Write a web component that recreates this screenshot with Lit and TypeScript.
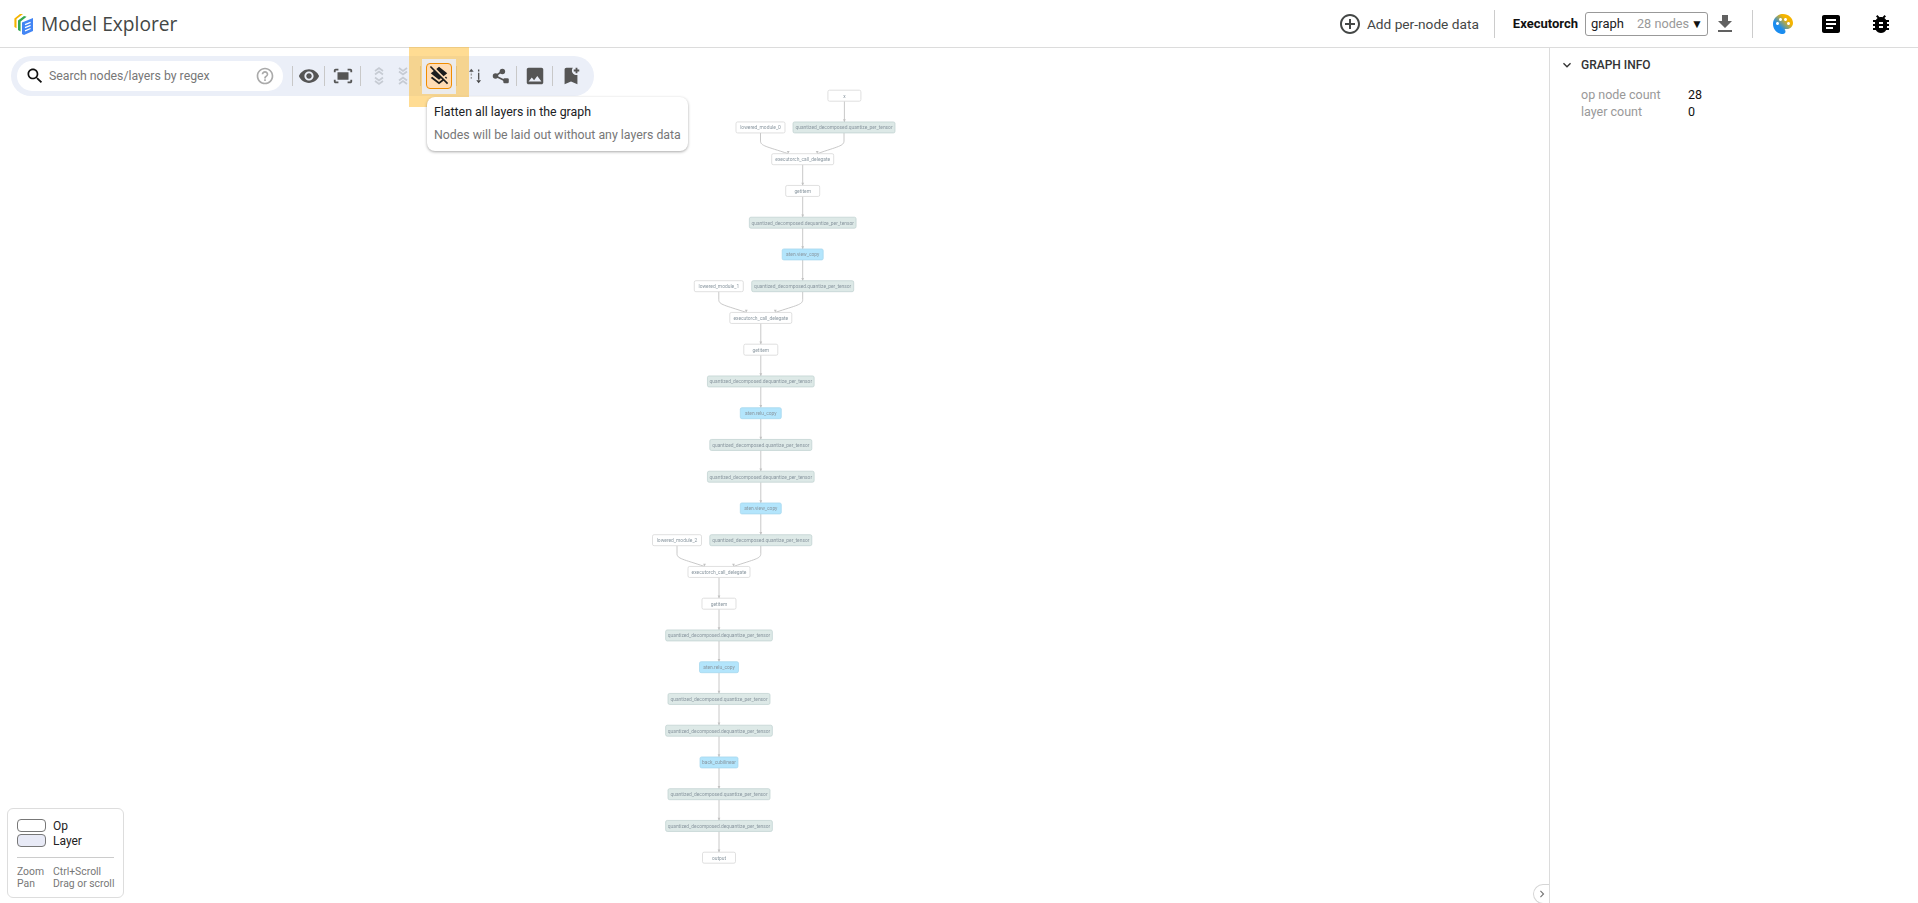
import { LitElement, html, css, svg } from "lit";
import { customElement } from "lit/decorators.js";

const P = {
  search: "M15.5 14h-.79l-.28-.27C15.41 12.59 16 11.11 16 9.5 16 5.91 13.09 3 9.5 3S3 5.91 3 9.5 5.91 16 9.5 16c1.61 0 3.09-.59 4.23-1.57l.27.28v.79l5 4.99L20.49 19l-4.99-5zm-6 0C7.01 14 5 11.99 5 9.5S7.01 5 9.5 5 14 7.01 14 9.5 11.99 14 9.5 14z",
  help: "M11 18h2v-2h-2v2zm1-16C6.48 2 2 6.48 2 12s4.48 10 10 10 10-4.48 10-10S17.52 2 12 2zm0 18c-4.41 0-8-3.59-8-8s3.59-8 8-8 8 3.59 8 8-3.59 8-8 8zm0-14c-2.21 0-4 1.79-4 4h2c0-1.1.9-2 2-2s2 .9 2 2c0 2-3 1.75-3 5h2c0-2.25 3-2.5 3-5 0-2.21-1.79-4-4-4z",
  eye: "M12 4.5C7 4.5 2.73 7.61 1 12c1.73 4.39 6 7.5 11 7.5s9.27-3.11 11-7.5c-1.73-4.39-6-7.5-11-7.5zM12 17c-2.76 0-5-2.24-5-5s2.24-5 5-5 5 2.24 5 5-2.24 5-5 5zm0-8c-1.66 0-3 1.34-3 3s1.34 3 3 3 3-1.34 3-3-1.34-3-3-3z",
  fit: "M17 4h3c1.1 0 2 .9 2 2v2h-2V6h-3V4zM4 8V6h3V4H4c-1.1 0-2 .9-2 2v2h2zm16 8v2h-3v2h3c1.1 0 2-.9 2-2v-2h-2zM7 18H4v-2H2v2c0 1.1.9 2 2 2h3v-2zM18 8H6v8h12V8z",
  flat: "M19.81 14.99l1.19-.92-1.43-1.43-1.19.92 1.43 1.43zm-.45-4.72L21 9l-9-7-2.91 2.27 7.87 7.88 2.4-1.88zM3.27 1L2 2.27l4.22 4.22L3 9l1.63 1.27L12 16l2.1-1.63 1.43 1.43L12 18.54l-7.37-5.73L3 14.07l9 7 4.95-3.85L20.73 21 22 19.73 3.27 1z",
  image: "M21 19V5c0-1.1-.9-2-2-2H5c-1.1 0-2 .9-2 2v14c0 1.1.9 2 2 2h14c1.1 0 2-.9 2-2zM8.5 13.5l2.5 3.01L14.5 12l4.5 6H5l3.5-4.5z",
  bookmark: "M21 7h-2v2h-2V7h-2V5h2V3h2v2h2v2zm-2 14-7-3-7 3V5c0-1.1.9-2 2-2h7c-.63.84-1 1.87-1 3 0 2.76 2.24 5 5 5 .34 0 .68-.03 1-.1V21z",
  add: "M13 7h-2v4H7v2h4v4h2v-4h4v-2h-4V7zm-1-5C6.48 2 2 6.48 2 12s4.48 10 10 10 10-4.48 10-10S17.52 2 12 2zm0 18c-4.41 0-8-3.59-8-8s3.59-8 8-8 8 3.59 8 8-3.59 8-8 8z",
  download: "M19 9h-4V3H9v6H5l7 7 7-7zM5 18v2h14v-2H5z",
  palette: "M12 2C6.49 2 2 6.49 2 12s4.49 10 10 10c1.38 0 2.5-1.12 2.5-2.5 0-.61-.23-1.2-.64-1.67-.08-.1-.13-.21-.13-.33 0-.28.22-.5.5-.5H16c3.31 0 6-2.69 6-6 0-4.96-4.49-9-10-9zm5.5 11c-.83 0-1.5-.67-1.5-1.5s.67-1.5 1.5-1.5 1.5.67 1.5 1.5-.67 1.5-1.5 1.5zm-3-4c-.83 0-1.5-.67-1.5-1.5S13.67 6 14.5 6s1.5.67 1.5 1.5S15.33 9 14.5 9zM5 11.5c0-.83.67-1.5 1.5-1.5s1.5.67 1.5 1.5S7.33 13 6.5 13 5 12.33 5 11.5zm6-4c0 .83-.67 1.5-1.5 1.5S8 8.33 8 7.5 8.67 6 9.5 6s1.5.67 1.5 1.5z",
  article: "M19 3H5c-1.1 0-2 .9-2 2v14c0 1.1.9 2 2 2h14c1.1 0 2-.9 2-2V5c0-1.1-.9-2-2-2zm-5 14H7v-2h7v2zm3-4H7v-2h10v2zm0-4H7V7h10v2z",
  bug: "M20 8h-2.81c-.45-.78-1.07-1.45-1.82-1.96L17 4.41 15.59 3l-2.17 2.17C12.96 5.06 12.49 5 12 5s-.96.06-1.41.17L8.41 3 7 4.41l1.62 1.63C7.88 6.55 7.26 7.22 6.81 8H4v2h2.09c-.05.33-.09.66-.09 1v1H4v2h2v1c0 .34.04.67.09 1H4v2h2.81c1.04 1.79 2.97 3 5.19 3s4.15-1.21 5.19-3H20v-2h-2.09c.05-.33.09-.66.09-1v-1h2v-2h-2v-1c0-.34-.04-.67-.09-1H20V8zm-6 8h-4v-2h4v2zm0-4h-4v-2h4v2z",
  more: "M16.59 8.59L12 13.17 7.41 8.59 6 10l6 6 6-6z",
  right: "M10 6L8.59 7.41 13.17 12l-4.58 4.59L10 18l6-6z",
};

const icon = (d: string, cls = "") => html`<svg class="ic ${cls}" viewBox="0 0 24 24"><path d=${d}></path></svg>`;

type Kind = "op" | "tq" | "blue";
interface N { r: number; c: number; w: number; t: string; k: Kind; }

const Q = "quantized_decomposed.quantize_per_tensor";
const D = "quantized_decomposed.dequantize_per_tensor";
const CD = "executorch_call_delegate";
const A = 802.7, B = 760.8, C = 719;

const NODES: N[] = [
  { r: 0, c: 844.4, w: 33, t: "x", k: "op" },
  { r: 1, c: 760.5, w: 49, t: "lowered_module_0", k: "op" },
  { r: 1, c: 844, w: 102, t: Q, k: "tq" },
  { r: 2, c: A, w: 62, t: CD, k: "op" },
  { r: 3, c: A, w: 34, t: "getitem", k: "op" },
  { r: 4, c: A, w: 106.7, t: D, k: "tq" },
  { r: 5, c: A, w: 41, t: "aten.view_copy", k: "blue" },
  { r: 6, c: 718.8, w: 49, t: "lowered_module_1", k: "op" },
  { r: 6, c: A, w: 102, t: Q, k: "tq" },
  { r: 7, c: B, w: 62, t: CD, k: "op" },
  { r: 8, c: B, w: 34, t: "getitem", k: "op" },
  { r: 9, c: B, w: 106.7, t: D, k: "tq" },
  { r: 10, c: B, w: 41, t: "aten.relu_copy", k: "blue" },
  { r: 11, c: B, w: 102, t: Q, k: "tq" },
  { r: 12, c: B, w: 106.7, t: D, k: "tq" },
  { r: 13, c: B, w: 41, t: "aten.view_copy", k: "blue" },
  { r: 14, c: 677, w: 49, t: "lowered_module_2", k: "op" },
  { r: 14, c: B, w: 102, t: Q, k: "tq" },
  { r: 15, c: C, w: 62, t: CD, k: "op" },
  { r: 16, c: C, w: 34, t: "getitem", k: "op" },
  { r: 17, c: C, w: 106.7, t: D, k: "tq" },
  { r: 18, c: C, w: 39, t: "aten.relu_copy", k: "blue" },
  { r: 19, c: C, w: 102, t: Q, k: "tq" },
  { r: 20, c: C, w: 106.7, t: D, k: "tq" },
  { r: 21, c: C, w: 38, t: "back_cubilinear", k: "blue" },
  { r: 22, c: C, w: 102, t: Q, k: "tq" },
  { r: 23, c: C, w: 106.7, t: D, k: "tq" },
  { r: 24, c: C, w: 33, t: "output", k: "op" },
];

const rowY = (r: number) => 95.7 + r * 31.75;

const V: [number, number][] = [
  [844.4, 0], [A, 2], [A, 3], [A, 4], [A, 5],
  [B, 7], [B, 8], [B, 9], [B, 10], [B, 11], [B, 12], [B, 13],
  [C, 15], [C, 16], [C, 17], [C, 18], [C, 19], [C, 20], [C, 21], [C, 22], [C, 23],
];
const M: [number, number, number, number][] = [
  [760.5, 844, A, 1],
  [718.8, A, B, 6],
  [677, B, C, 14],
];

const arrow = (x: number, y: number) => svg`<path class="arrow" d="M${x - 1.4} ${y - 2.6}L${x} ${y}L${x + 1.4} ${y - 2.6}z"></path>`;

function edges() {
  const out: unknown[] = [];
  for (const [x, r] of V) {
    const y1 = rowY(r) + 5.5, y2 = rowY(r + 1) - 5.5;
    out.push(svg`<path class="edge" d="M${x} ${y1}V${y2}"></path>`, arrow(x, y2));
  }
  for (const [l, q, t, r] of M) {
    const y1 = rowY(r) + 5.5, y2 = rowY(r + 1) - 5.5;
    const tl = t - 14.5, tr = t + 14.5;
    out.push(
      svg`<path class="edge" d="M${l} ${y1}V${y1 + 8}C${l} ${y1 + 13} ${l + 6} ${y1 + 13.5} ${tl} ${y2}"></path>`,
      svg`<path class="edge" d="M${q} ${y1}V${y1 + 8}C${q} ${y1 + 13} ${q - 6} ${y1 + 13.5} ${tr} ${y2}"></path>`,
      arrow(tl, y2), arrow(tr, y2)
    );
  }
  return out;
}

@customElement("app-root")
export class AppRoot extends LitElement {
  static styles = css`
    :host { display: flex; flex-direction: column; height: 100vh; overflow: hidden; background: #fff; font-family: Roboto, "Liberation Sans", sans-serif; color: #202124; }
    .ic { display: block; width: 24px; height: 24px; fill: currentColor; flex: none; }
    header { flex: none; height: 47px; border-bottom: 1px solid #dcdcdc; display: flex; align-items: center; padding: 0 25px 0 13px; }
    .logo { width: 21px; height: 23px; margin-right: 7px; flex: none; }
    .title { font-family: "Open Sans", sans-serif; font-size: 19.2px; color: #444746; }
    .grow { flex: 1; }
    .add { display: flex; align-items: center; color: #444746; gap: 5px; font-size: 13.7px; margin-right: 15px; }
    .vsep { width: 1px; height: 28px; background: #ccc; flex: none; }
    .name { font-weight: 700; font-size: 13px; margin: 0 7px 0 18px; color: #111; }
    .select { width: 123px; height: 24px; box-sizing: border-box; border: 1px solid #999; border-radius: 3px; display: flex; align-items: center; padding: 0 4px 0 5px; font-size: 13px; }
    .select .sub { color: #999; margin-left: 13px; flex: 1; font-size: 12.7px; }
    .select .caret { font-size: 12px; color: #111; }
    .dl { color: #616161; margin: 0 15px 0 5px; }
    .pal { margin-left: 18px; }
    .art { margin-left: 24px; color: #000; }
    .bug { margin-left: 26px; color: #000; }
    main { flex: 1; display: flex; min-height: 0; }
    .canvas { flex: 1; position: relative; min-width: 0; }
    .graph { position: absolute; left: 0; top: -48px; width: 1549px; height: 903px; filter: blur(0.4px); }
    .edge { fill: none; stroke: #c2c2c2; stroke-width: 0.9; }
    .arrow { fill: #c2c2c2; }
    .n { stroke-width: 0.7; }
    .n.op { fill: #fff; stroke: #d2d2d2; }
    .n.tq { fill: #dde9e7; stroke: #bdd0ce; }
    .n.blue { fill: #b3e5fc; stroke: #a3d5ec; }
    .lbl { font-family: Roboto, sans-serif; font-size: 4.9px; fill: #8a97a0; text-anchor: middle; dominant-baseline: central; }
    .toolbar { position: absolute; left: 11px; top: 8px; width: 583px; height: 40px; border-radius: 20px; background: #ebeff8; display: flex; align-items: center; padding-left: 6px; box-sizing: border-box; }
    .input { width: 266px; height: 30px; background: #fff; border-radius: 15px; display: flex; align-items: center; box-sizing: border-box; padding: 0 8px; margin-right: 9px; flex: none; }
    .input .s { width: 20px; height: 20px; color: #111; margin-right: 4px; }
    .input .txt { flex: 1; font-size: 12.3px; color: #777; }
    .input .h { width: 20px; height: 20px; color: #aaa; }
    .sep { width: 1px; height: 20px; background: #c8c8c8; flex: none; }
    .tool { display: flex; align-items: center; justify-content: center; flex: none; color: #555; height: 30px; }
    .tool .ic { width: 22px; height: 22px; }
    .eye { width: 31px; }
    .fit { width: 35px; }
    .grp1 { display: flex; padding: 0 5px 0 6px; }
    .grp2 { display: flex; padding: 0 2px 0 5px; }
    .u { width: 24px; color: #c6cbd3; }
    .u svg { width: 14px; height: 20px; fill: none; stroke: currentColor; stroke-width: 1.7; }
    .box { position: relative; z-index: 1; width: 34px; height: 35px; margin-left: 1px; background: #ebebec; display: flex; align-items: center; justify-content: center; flex: none; }
    .act { width: 26px; height: 26px; box-sizing: border-box; border: 1px solid #f08c00; border-radius: 4px; background: #ffdcb4; display: flex; align-items: center; justify-content: center; color: #1c1c1c; }
    .act .ic { width: 22px; height: 22px; }
    .sq { width: 26px; }
    .img { width: 35px; }
    .bm { width: 36px; }
    .hl { position: absolute; left: 398px; top: -9px; width: 60px; height: 60px; background: rgba(255, 186, 40, 0.5); }
    .tip { position: absolute; left: 427px; top: 49px; width: 261px; height: 54px; box-sizing: border-box; background: #fff; border-radius: 8px; box-shadow: 0 1px 3px rgba(0,0,0,.35); padding: 7px 7px; z-index: 2; }
    .tip .t1 { font-size: 12.35px; line-height: 17px; color: #202124; }
    .tip .t2 { font-size: 12.35px; line-height: 17px; color: #777; margin-top: 6px; white-space: nowrap; }
    .legend { position: absolute; left: 7px; bottom: 5px; width: 117px; height: 90px; box-sizing: border-box; background: #fff; border: 1px solid #ddd; border-radius: 6px; padding: 9px 9px 0; font-size: 12px; color: #222; }
    .lr { display: flex; align-items: center; gap: 7px; height: 15px; }
    .sw { width: 29px; height: 13px; box-sizing: border-box; border: 1px solid #777; border-radius: 4px; background: #fff; flex: none; }
    .sw.l { background: #e8eaf6; }
    .hr { height: 1px; background: #ccc; margin: 9px 0 8px; }
    .kv { display: grid; grid-template-columns: 36px auto; font-size: 10.4px; line-height: 12px; color: #777; white-space: nowrap; }
    .panel { width: 369px; flex: none; border-left: 1px solid #dcdcdc; position: relative; padding: 0 0 0 17px; box-sizing: border-box; }
    .ph { display: flex; align-items: center; height: 34px; font-size: 12px; font-weight: 500; color: #333; }
    .ph .ic { width: 16px; height: 16px; margin-right: 6px; margin-left: -8px; color: #333; }
    .info { display: grid; grid-template-columns: 107px auto; padding: 4px 0 0 14px; font-size: 12.5px; line-height: 17px; }
    .info .k { color: #999; }
    .info .v { color: #111; }
    .tog { position: absolute; left: -17px; bottom: -1px; width: 16px; height: 20px; box-sizing: border-box; border: 1px solid #d6d6d6; border-right: 0; border-radius: 10px 0 0 10px; background: #fff; display: flex; align-items: center; justify-content: center; color: #777; }
    .tog .ic { width: 14px; height: 14px; }
  `;

  render() {
    return html`
      <header>
        <svg class="logo" viewBox="0 0 21 23">
          <path d="M1.4 6.5L7 2h3L3.5 7v9.2L1.4 15z" fill="#f5b400"></path>
          <path d="M5 8.5L11 4l2.6.8L7.6 9.5v10L5 18z" fill="#34a853"></path>
          <path d="M9 10.5L20 6v13l-9 4-2-1z" fill="#4285f4"></path>
          <path d="M12 12.6l5.6-2.3M12 15.6l5.6-2.3M12 18.8l5.6-2.3" stroke="#fff" stroke-width="1.3" fill="none"></path>
        </svg>
        <span class="title">Model Explorer</span>
        <span class="grow"></span>
        <div class="add">${icon(P.add)}<span>Add per-node data</span></div>
        <div class="vsep"></div>
        <span class="name">Executorch</span>
        <div class="select"><span>graph</span><span class="sub">28 nodes</span><span class="caret">▼</span></div>
        <span class="dl">${icon(P.download)}</span>
        <div class="vsep"></div>
        <svg class="ic pal" viewBox="0 0 24 24">
          <defs><linearGradient id="pg" x1="0.1" y1="0.9" x2="0.9" y2="0.1"><stop offset="0.3" stop-color="#1a8cf0"></stop><stop offset="0.75" stop-color="#f5b400"></stop></linearGradient></defs>
          <path fill="url(#pg)" d=${P.palette}></path>
        </svg>
        <span class="art">${icon(P.article)}</span>
        <span class="bug">${icon(P.bug)}</span>
      </header>
      <main>
        <section class="canvas">
          <svg class="graph" viewBox="0 0 1549 903">
            ${edges()}
            ${NODES.map((n) => svg`
              <rect class="n ${n.k}" x=${n.c - n.w / 2} y=${rowY(n.r) - 5.5} width=${n.w} height="11" rx="1.6"></rect>
              <text class="lbl" x=${n.c} y=${rowY(n.r)}>${n.t}</text>`)}
          </svg>
          <div class="toolbar">
            <div class="hl"></div>
            <div class="input">${icon(P.search, "s")}<span class="txt">Search nodes/layers by regex</span>${icon(P.help, "h")}</div>
            <div class="sep"></div>
            <div class="tool eye">${icon(P.eye)}</div>
            <div class="sep"></div>
            <div class="tool fit">${icon(P.fit)}</div>
            <div class="sep"></div>
            <div class="grp1">
              <div class="tool u"><svg viewBox="0 0 14 20"><path d="M3 5l4-3 4 3M3 8.5l4-3 4 3M3 11.5l4 3 4-3M3 15l4 3 4-3"></path></svg></div>
              <div class="tool u"><svg viewBox="0 0 14 20"><path d="M3 2l4 3 4-3M3 5.5l4 3 4-3M3 14.5l4-3 4 3M3 18l4-3 4 3"></path></svg></div>
            </div>
            <div class="sep"></div>
            <div class="box"><div class="act">${icon(P.flat)}</div></div>
            <div class="sep"></div>
            <div class="grp2">
              <div class="tool sq">
                <svg viewBox="0 0 24 24" class="ic">
                  <path d="M8 15V7" stroke="#999" stroke-width="1.5" stroke-dasharray="2 1.6" fill="none"></path>
                  <path d="M8 4l2.6 3.4H5.4z" fill="#555"></path>
                  <path d="M16 5v11" stroke="#555" stroke-width="1.5" stroke-dasharray="2 1.4 8" fill="none"></path>
                  <path d="M16 20l-2.6-3.4h5.2z" fill="#444"></path>
                </svg>
              </div>
              <div class="tool sq">
                <svg viewBox="0 0 24 24" class="ic">
                  <path d="M6 12L13 7M6 12L17 17.5" stroke="#555" stroke-width="1.8" fill="none"></path>
                  <circle cx="6" cy="12" r="3" fill="#555"></circle>
                  <circle cx="13.5" cy="7" r="3" fill="#555"></circle>
                  <rect x="14.5" y="14.5" width="6" height="5.5" rx="1.4" fill="#555"></rect>
                </svg>
              </div>
            </div>
            <div class="sep"></div>
            <div class="tool img">${icon(P.image)}</div>
            <div class="sep"></div>
            <div class="tool bm">${icon(P.bookmark)}</div>
          </div>
          <div class="tip">
            <div class="t1">Flatten all layers in the graph</div>
            <div class="t2">Nodes will be laid out without any layers data</div>
          </div>
          <div class="legend">
            <div class="lr"><span class="sw"></span>Op</div>
            <div class="lr"><span class="sw l"></span>Layer</div>
            <div class="hr"></div>
            <div class="kv"><span>Zoom</span><span>Ctrl+Scroll</span><span>Pan</span><span>Drag or scroll</span></div>
          </div>
        </section>
        <aside class="panel">
          <div class="tog">${icon(P.right)}</div>
          <div class="ph">${icon(P.more)}<span>GRAPH INFO</span></div>
          <div class="info">
            <span class="k">op node count</span><span class="v">28</span>
            <span class="k">layer count</span><span class="v">0</span>
          </div>
        </aside>
      </main>
    `;
  }
}
